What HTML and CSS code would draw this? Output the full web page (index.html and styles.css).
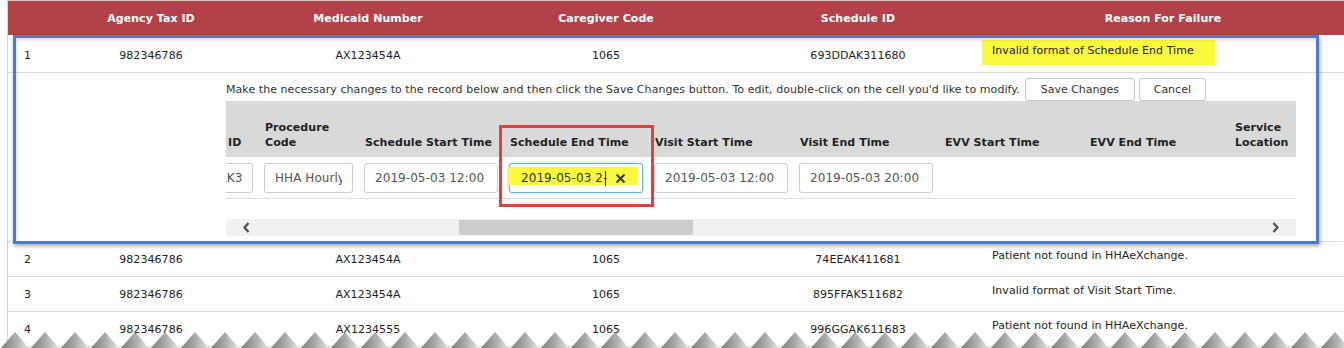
FILE: index.html
```html
<!DOCTYPE html>
<html lang="en">
<head>
    <meta charset="UTF-8">
    <meta name="viewport" content="width=device-width, initial-scale=1.0">
    <title>Failed Visits</title>
    <link rel="stylesheet" href="styles.css">
</head>
<body>
    <div class="page">
        <div class="results">
            <div class="head-row">
                <div></div>
                <div>Agency Tax ID</div>
                <div>Medicaid Number</div>
                <div>Caregiver Code</div>
                <div>Schedule ID</div>
                <div>Reason For Failure</div>
            </div>

            <div class="row first">
                <div class="num">1</div>
                <div>982346786</div>
                <div>AX123454A</div>
                <div>1065</div>
                <div>693DDAK311680</div>
                <div class="reason"><span class="marked">Invalid format of Schedule End Time</span></div>
            </div>

            <!-- Edit panel for the failed record -->
            <div class="edit-panel">
                <div class="edit-bar">
                    <span>Make the necessary changes to the record below and then click the Save Changes button. To edit, double-click on the cell you'd like to modify.</span>
                    <button class="btn save">Save Changes</button>
                    <button class="btn cancel">Cancel</button>
                </div>
                <div class="edit-grid">
                    <div class="edit-head">
                        <div class="col c-id">Schedule ID</div>
                        <div class="col c-proc">Procedure Code</div>
                        <div class="col">Schedule Start Time</div>
                        <div class="col">Schedule End Time</div>
                        <div class="col">Visit Start Time</div>
                        <div class="col">Visit End Time</div>
                        <div class="col">EVV Start Time</div>
                        <div class="col">EVV End Time</div>
                        <div class="col c-loc">Service Location</div>
                    </div>
                    <div class="edit-body">
                        <div class="col c-id"><input class="field" value="693DDAK311680" readonly></div>
                        <div class="col c-proc"><input class="field" value="HHA Hourly" readonly></div>
                        <div class="col"><input class="field" value="2019-05-03 12:00" readonly></div>
                        <div class="col">
                            <div class="field focus">
                                <span class="marker"></span>
                                <span class="typed">2019-05-03 2-</span><span class="caret"></span>
                                <svg class="clear" width="11" height="11" viewBox="0 0 11 11"><path d="M1.5 1.5 L9.5 9.5 M9.5 1.5 L1.5 9.5" stroke="#3a3a3a" stroke-width="2" fill="none"/></svg>
                            </div>
                        </div>
                        <div class="col"><input class="field" value="2019-05-03 12:00" readonly></div>
                        <div class="col"><input class="field" value="2019-05-03 20:00" readonly></div>
                        <div class="col"></div>
                        <div class="col"></div>
                        <div class="col c-loc"></div>
                    </div>
                </div>
                <div class="scrollbar">
                    <div class="scroll-arrow">
                        <svg width="9" height="11" viewBox="0 0 9 11"><polyline points="6.5,1 2.5,5.5 6.5,10" fill="none" stroke="#505050" stroke-width="2.2"/></svg>
                    </div>
                    <div class="scroll-thumb"></div>
                    <div class="scroll-space"></div>
                    <div class="scroll-arrow">
                        <svg width="9" height="11" viewBox="0 0 9 11"><polyline points="2.5,1 6.5,5.5 2.5,10" fill="none" stroke="#505050" stroke-width="2.2"/></svg>
                    </div>
                </div>
            </div>

            <div class="row">
                <div class="num">2</div>
                <div>982346786</div>
                <div>AX123454A</div>
                <div>1065</div>
                <div>74EEAK411681</div>
                <div class="reason">Patient not found in HHAeXchange.</div>
            </div>
            <div class="row">
                <div class="num">3</div>
                <div>982346786</div>
                <div>AX123454A</div>
                <div>1065</div>
                <div>895FFAK511682</div>
                <div class="reason">Invalid format of Visit Start Time.</div>
            </div>
            <div class="row">
                <div class="num">4</div>
                <div>982346786</div>
                <div>AX1234555</div>
                <div>1065</div>
                <div>996GGAK611683</div>
                <div class="reason">Patient not found in HHAeXchange.</div>
            </div>
        </div>

        <!-- annotations drawn over the grid -->
        <div class="callout blue"></div>
        <div class="callout red"></div>

        <svg class="torn" width="1344" height="17" viewBox="0 0 1344 17">
            <defs>
                <linearGradient id="tooth" x1="0" y1="0" x2="1" y2="0">
                    <stop offset="0" stop-color="#7e7e7e"/>
                    <stop offset="0.5" stop-color="#a9a9a9"/>
                    <stop offset="1" stop-color="#e8e8e8"/>
                </linearGradient>
                <pattern id="teeth" width="30" height="17" patternUnits="userSpaceOnUse">
                    <polygon points="1,17 15,1 29,17" fill="url(#tooth)"/>
                </pattern>
            </defs>
            <rect width="1344" height="17" fill="url(#teeth)"/>
        </svg>
    </div>
</body>
</html>
```

FILE: styles.css
```css
*, *::before, *::after {
    box-sizing: border-box;
}

body {
    margin: 0;
    font-family: "DejaVu Sans", Verdana, sans-serif;
    font-size: 11px;
    line-height: 13px;
    letter-spacing: 0.06px;
    color: #222;
    background-color: #fff;
}

.page {
    position: relative;
    width: 1344px;
    height: 348px;
    overflow: hidden;
}

.results {
    margin-left: 7px;
    border-left: 1px solid #d4d4d4;
    border-top: 1px solid #c9c9c9;
}

.head-row,
.row {
    display: grid;
    grid-template-columns: 36px 214px 220px 256px 248px 1fr;
    align-items: center;
    text-align: center;
}

.head-row {
    height: 34px;
    background-color: #b4414a;
    color: #fff;
    font-weight: bold;
}

.row {
    height: 35px;
    border-bottom: 1px solid #dcdcdc;
}

.row.first {
    height: 38px;
    padding-top: 3px;
}

.row .num {
    text-align: left;
    padding-left: 16px;
}

.row .reason {
    align-self: start;
    text-align: left;
    padding: 7px 0 0 10px;
}

.row.first .reason {
    padding: 2px 0 0 0;
}

.marked {
    display: inline-block;
    background-color: #fafa3c;
    padding: 4px 21px 8px 10px;
}

/* edit panel */
.edit-panel {
    border-bottom: 1px solid #dcdcdc;
    padding: 5px 48px 5px 218px;
}

.edit-bar {
    display: flex;
    align-items: center;
    height: 23px;
    color: #333;
    white-space: nowrap;
}

.btn {
    height: 23px;
    padding: 0;
    background-color: #fff;
    border: 1px solid #c6c6c6;
    border-radius: 3px;
    font: inherit;
    color: #333;
}

.btn.save {
    width: 110px;
    margin-left: 5px;
}

.btn.cancel {
    width: 67px;
    margin-left: 4px;
}

.edit-grid {
    overflow: hidden;
}

.edit-head,
.edit-body {
    display: flex;
    gap: 11px;
    margin-left: -60px;
}

.edit-head {
    height: 56px;
    align-items: flex-end;
    padding-bottom: 7px;
    background-color: #d9d9d9;
    font-weight: bold;
    line-height: 15px;
}

.edit-head .col {
    padding-left: 1px;
}

.edit-body {
    padding: 6px 0 5px;
    border-bottom: 1px solid #dcdcdc;
}

.col {
    flex: none;
    width: 134px;
}

.col.c-id {
    width: 87px;
    white-space: nowrap;
}

.col.c-proc {
    width: 89px;
}

.col.c-loc {
    width: 80px;
}

.field {
    display: block;
    width: 100%;
    height: 30px;
    padding: 0 10px;
    border: 1px solid #ccc;
    border-radius: 3px;
    background-color: #fff;
    font: 12px "DejaVu Sans", Verdana, sans-serif;
    letter-spacing: 0.06px;
    color: #555;
    outline: none;
}

.field.focus {
    position: relative;
    display: flex;
    align-items: center;
    border-color: #66afe9;
    box-shadow: 0 0 3px rgba(102, 175, 233, 0.6);
    color: #333;
}

.field .marker {
    position: absolute;
    left: -3px;
    top: 3px;
    width: 131px;
    height: 18px;
    background-color: #fafa3c;
}

.field .typed {
    position: relative;
    padding-left: 1px;
}

.field .caret {
    position: relative;
    width: 1px;
    height: 15px;
    margin-left: -2px;
    background-color: #111;
}

.field .clear {
    position: relative;
    margin-left: 9px;
}

.scrollbar {
    display: flex;
    align-items: center;
    height: 17px;
    margin-top: 20px;
    background-color: #f1f1f1;
}

.scroll-arrow {
    display: flex;
    justify-content: center;
    width: 41px;
}

.scroll-thumb {
    width: 234px;
    height: 15px;
    margin-left: 192px;
    background-color: #cdcdcd;
}

.scroll-space {
    flex: 1;
}

/* annotations */
.callout {
    position: absolute;
    pointer-events: none;
}

.callout.blue {
    left: 13px;
    top: 35px;
    width: 1306px;
    height: 209px;
    border: 3px solid #4b7bcf;
    box-shadow: 1px 2px 4px rgba(0, 0, 0, 0.35), inset 1px 2px 3px rgba(0, 0, 0, 0.15);
}

.callout.red {
    left: 499px;
    top: 125px;
    width: 155px;
    height: 82px;
    border: 3px solid #e1413b;
}

.torn {
    position: absolute;
    left: 0;
    bottom: 0;
}
```
